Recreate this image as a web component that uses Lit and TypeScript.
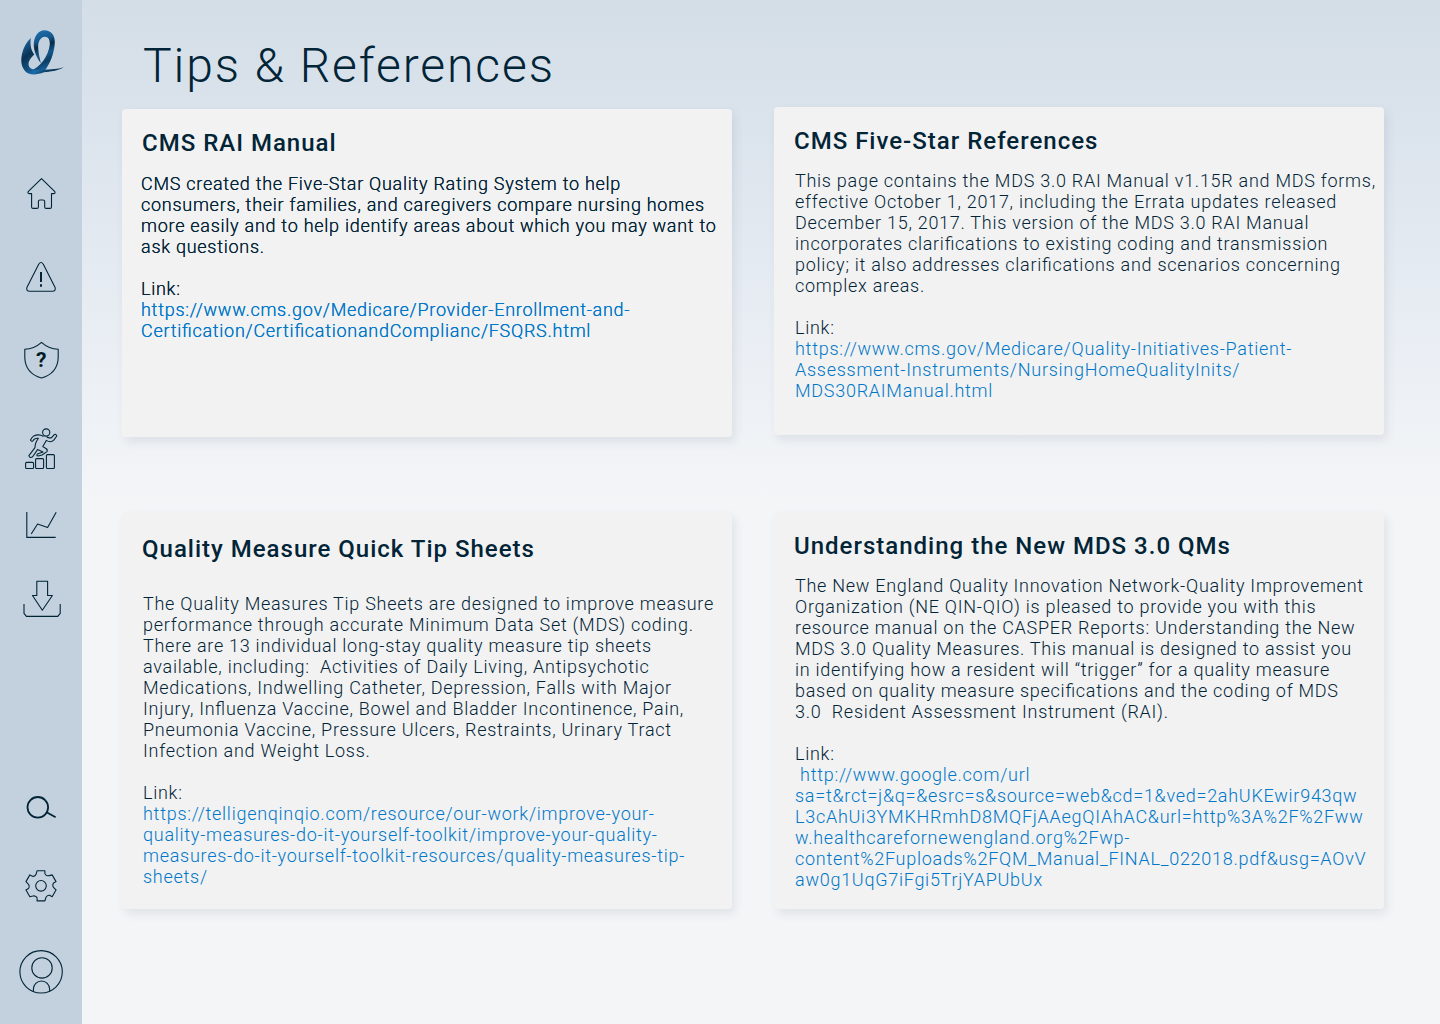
import { LitElement, html, svg, css } from "lit";
import { customElement, property } from "lit/decorators.js";

interface NavItem {
  name: string;
  top: number;
  height: number;
  art: unknown;
}

const cog = (() => {
  const cx = 41, cy = 885.8;
  const pts: string[] = [];
  for (let i = 0; i < 6; i++) {
    const a = (i * 60 * Math.PI) / 180;
    const p = (x: number, y: number) =>
      `${(cx + x * Math.cos(a) - y * Math.sin(a)).toFixed(2)} ${(cy + x * Math.sin(a) + y * Math.cos(a)).toFixed(2)}`;
    pts.push(
      `${i === 0 ? "M" : "L"}${p(-3.9, -15.1)}L${p(3.9, -15.1)}L${p(3.9, -12.2)}Q${p(4.4, -10.9)} ${p(5.6, -10.4)}Q${p(6.8, -9.8)} ${p(8.2, -10.2)}`
    );
  }
  return pts.join("") + "Z";
})();

const topItems: NavItem[] = [
  {
    name: "home", top: 150, height: 85,
    art: svg`<path d="M41.5 178.6 54.6 191.3Q56 193.6 53.4 193.6H51.5V206.9Q51.5 208.4 50 208.4H46.2Q44.7 208.4 44.7 206.9V201.6Q44.7 200 43 200H40Q38.4 200 38.4 201.6V206.9Q38.4 208.4 36.9 208.4H33.1Q31.6 208.4 31.6 206.9V193.6H29.6Q27 193.6 28.4 191.3Z"/>`,
  },
  {
    name: "alerts", top: 235, height: 85,
    art: svg`<path d="M38.7 264.2Q41 260.9 43.3 264.2L55 287.2Q56.2 291.3 52.4 291.3H29.6Q25.8 291.3 27 287.2Z"/><path stroke-width="2" d="M41 272V282M41 284.2V286.8"/>`,
  },
  {
    name: "help", top: 320, height: 85,
    art: svg`<path d="M41.5 342.4Q34 349.2 24.8 349.2V358Q25.6 373.5 41.5 378Q57.4 373.5 58.2 358V349.2Q49 349.2 41.5 342.4Z"/><text class="q" x="41.3" y="367.4">?</text>`,
  },
  {
    name: "goals", top: 405, height: 85,
    art: svg`<circle cx="46.2" cy="432.5" r="3.6"/><path d="M43.600 436.400C40.500 434.600 37 434.500 33.800 435.900Q31.600 437.600 30.500 440Q31.600 442.300 33.100 440.600Q34.400 437.900 38.400 438.300C35.800 442 34.800 445 35 447.600L28.900 455.600Q29.800 458.600 32.600 456.800L37.600 449.600L43 452L37.400 454Q36 455.600 38.200 456L42 455L47 451.600Q48 449.600 45.600 448.300L42.800 446.600L46.300 440.400Q50.500 443 53.600 440.400L56.800 436Q55.600 433.200 54 434.800L51.600 437.600Q48.600 438.400 46.800 437"/><rect x="25.600" y="462.400" width="8" height="6.100" rx="1"/><rect x="35.600" y="458.600" width="8" height="9.900" rx="1"/><rect x="46.400" y="454.600" width="8" height="13.900" rx="1"/>`,
  },
  {
    name: "trends", top: 490, height: 70,
    art: svg`<path d="M26.8 512V537.4H55.7"/><path d="M31.2 534 37.6 524 47.6 527.4 56.2 512.2"/>`,
  },
  {
    name: "download", top: 560, height: 80,
    art: svg`<path d="M36.8 581.3H47.6V595.5H52.4L42.3 610.2 32.5 595.5H36.8Z"/><path d="M24 604V613.4L26.4 616.4H57.8L60.2 613.4V604"/>`,
  },
];

const bottomItems: NavItem[] = [
  {
    name: "search", top: 770, height: 75,
    art: svg`<circle cx="37.8" cy="807.3" r="10.3" stroke-width="1.8"/><path stroke-width="1.8" d="M46.6 812.2 55.6 817.2"/>`,
  },
  {
    name: "settings", top: 845, height: 85,
    art: svg`<path d=${cog}/><circle cx="41" cy="885.8" r="5.3"/>`,
  },
  {
    name: "profile", top: 930, height: 94,
    art: svg`<circle cx="41.100" cy="971.800" r="21.200"/><circle cx="42" cy="967.900" r="10.200"/><path d="M33.400 991.600V989.100A8.100 8.100 0 0 1 49.600 989.100V991.400"/>`,
  },
];

@customElement("side-nav")
class SideNav extends LitElement {
  static styles = css`
    :host { display: flex; flex-direction: column; justify-content: space-between; width: 82px; background: #c3d1de; }
    .logo { display: block; margin-bottom: 40px; }
    .item { display: block; }
    .item, .logo { width: 82px; }
    .icon { fill: none; stroke: #022437; stroke-width: 1.1; stroke-linejoin: round; }
    .q { font: 700 21px Roboto, sans-serif; fill: #011a28; stroke: none; text-anchor: middle; }
  `;
  private item = (i: NavItem) => html`<a class="item" aria-label=${i.name}>
    <svg class="item icon" height=${i.height} viewBox="0 ${i.top} 82 ${i.height}">${i.art}</svg>
  </a>`;
  render() {
    return html`
      <nav>
        <svg class="logo" height="110" viewBox="0 0 82 110">
          <defs>
            <linearGradient id="body" gradientUnits="userSpaceOnUse" x1="22" y1="46" x2="44" y2="74">
              <stop offset="0" stop-color="#1a5c92"/><stop offset=".3" stop-color="#0a3252"/><stop offset=".6" stop-color="#12507f"/><stop offset=".8" stop-color="#1b6cab"/><stop offset="1" stop-color="#0b3a5e"/>
            </linearGradient>
            <linearGradient id="loop" gradientUnits="userSpaceOnUse" x1="37" y1="34" x2="50" y2="70">
              <stop offset="0" stop-color="#1b69a6"/><stop offset=".2" stop-color="#15578b"/><stop offset=".34" stop-color="#082b46"/><stop offset=".55" stop-color="#15578b"/><stop offset=".75" stop-color="#0c3e66"/><stop offset="1" stop-color="#1b6cab"/>
            </linearGradient>
          </defs>
          <path fill="url(#loop)" d="M40.800 63.300C36 57 33.300 49 33.800 43C34.600 35 39 30.200 44.300 30.200C51 30.200 55.200 35 54.800 43C54.300 53 50 64 44.500 71L37 73.500L31 70.500C40 67.500 48.500 56 49.800 44.500C50 39.500 48.300 36.700 45 36.700C40 37 37.800 42 38.200 48C38.500 54 39.800 58 40.800 63.300Z"/>
          <path fill="url(#body)" d="M30.800 38C29.900 45 31 50 34.300 54.500C30 58.500 28 62 28.700 65.500C30 69.800 36 70.600 43 69.800C51 69 57.500 69.200 63.800 67.200C58 71.300 50 71.200 44 72.300C38 74.400 33 75.200 28.500 73.500C22 70.500 20 62 22 54C23.500 47.500 26.500 42 30.800 38Z"/>
        </svg>
        ${topItems.map(this.item)}
      </nav>
      <nav>${bottomItems.map(this.item)}</nav>
    `;
  }
}

@customElement("tip-card")
class TipCard extends LitElement {
  @property() heading = "";
  @property({ attribute: false }) lines: string[] = [];
  @property({ attribute: false }) link: string[] = [];
  static styles = css`
    :host { display: block; box-sizing: border-box; background: #f2f2f2; border-radius: 4px; box-shadow: 3px 5px 10px rgba(60, 80, 95, .1); color: #022437; }
    .heading { margin: 0; font: 500 24px/28px Roboto, sans-serif; letter-spacing: 1px; padding-left: 20px; white-space: pre; }
    .body { margin: var(--body-gap, 18px) 0 0; padding-left: var(--body-left, 21px); font: 300 18px/21px Roboto, sans-serif; letter-spacing: .73px; font-feature-settings: "liga" 1; white-space: pre; }
    .body, .link { text-shadow: var(--body-shadow, none); }
    .link { color: #0077c8; }
  `;
  render() {
    return html`<h2 class="heading">${this.heading}</h2><p class="body">${this.lines.join("\n")}

Link:
<a class="link">${this.link.join("\n")}</a></p>`;
  }
}

@customElement("app-root")
class AppRoot extends LitElement {
  static styles = css`
    :host { display: flex; width: 1440px; height: 1024px; overflow: hidden; background: linear-gradient(180deg, #d4dee7 0, #dae3ec 110px, #e3e9f1 240px, #ecf0f5 380px, #f3f5f7 500px, #f4f5f7 100%); }
    side-nav { flex: none; }
    .main { flex: 1; padding-left: 40px; }
    .title { margin: 0; height: 107px; box-sizing: border-box; padding: 38px 0 0 21px; font: 300 48px/56px Roboto, sans-serif; letter-spacing: 1.9px; color: #022437; white-space: pre; }
    .columns { display: grid; grid-template-columns: 610px 610px; column-gap: 42px; }
    .col { display: flex; flex-direction: column; }
    .rai { margin-top: 2px; height: 328px; padding-top: 20px; --body-gap: 16px; --body-left: 19px; --body-shadow: 0 0 0 currentColor; }
    .tips { margin-top: 75px; height: 397px; padding-top: 23px; --body-gap: 30px; }
    .star { height: 328px; padding-top: 20px; --body-gap: 15px; }
    .qms { margin-top: 77px; height: 397px; padding-top: 20px; --body-gap: 15px; }
  `;
  render() {
    return html`
      <side-nav></side-nav>
      <main class="main">
        <h1 class="title">Tips &amp; References</h1>
        <div class="columns">
          <div class="col">
            <tip-card class="rai" heading="CMS RAI Manual"
              .lines=${[
                "CMS created the Five-Star Quality Rating System to help",
                "consumers, their families, and caregivers compare nursing homes",
                "more easily and to help identify areas about which you may want to",
                "ask questions.",
              ]}
              .link=${[
                "https://www.cms.gov/Medicare/Provider-Enrollment-and-",
                "Certification/CertificationandComplianc/FSQRS.html",
              ]}></tip-card>
            <tip-card class="tips" heading="Quality Measure Quick Tip Sheets"
              .lines=${[
                "The Quality Measures Tip Sheets are designed to improve measure",
                "performance through accurate Minimum Data Set (MDS) coding.",
                "There are 13 individual long-stay quality measure tip sheets",
                "available, including:  Activities of Daily Living, Antipsychotic",
                "Medications, Indwelling Catheter, Depression, Falls with Major",
                "Injury, Influenza Vaccine, Bowel and Bladder Incontinence, Pain,",
                "Pneumonia Vaccine, Pressure Ulcers, Restraints, Urinary Tract",
                "Infection and Weight Loss.",
              ]}
              .link=${[
                "https://telligenqinqio.com/resource/our-work/improve-your-",
                "quality-measures-do-it-yourself-toolkit/improve-your-quality-",
                "measures-do-it-yourself-toolkit-resources/quality-measures-tip-",
                "sheets/",
              ]}></tip-card>
          </div>
          <div class="col">
            <tip-card class="star" heading="CMS Five-Star References"
              .lines=${[
                "This page contains the MDS 3.0 RAI Manual v1.15R and MDS forms,",
                "effective October 1, 2017, including the Errata updates released",
                "December 15, 2017. This version of the MDS 3.0 RAI Manual",
                "incorporates clarifications to existing coding and transmission",
                "policy; it also addresses clarifications and scenarios concerning",
                "complex areas.",
              ]}
              .link=${[
                "https://www.cms.gov/Medicare/Quality-Initiatives-Patient-",
                "Assessment-Instruments/NursingHomeQualityInits/",
                "MDS30RAIManual.html",
              ]}></tip-card>
            <tip-card class="qms" heading="Understanding the New MDS 3.0 QMs"
              .lines=${[
                "The New England Quality Innovation Network-Quality Improvement",
                "Organization (NE QIN-QIO) is pleased to provide you with this",
                "resource manual on the CASPER Reports: Understanding the New",
                "MDS 3.0 Quality Measures. This manual is designed to assist you",
                "in identifying how a resident will “trigger” for a quality measure",
                "based on quality measure specifications and the coding of MDS",
                "3.0  Resident Assessment Instrument (RAI).",
              ]}
              .link=${[
                " http://www.google.com/url",
                "sa=t&rct=j&q=&esrc=s&source=web&cd=1&ved=2ahUKEwir943qw",
                "L3cAhUi3YMKHRmhD8MQFjAAegQIAhAC&url=http%3A%2F%2Fww",
                "w.healthcarefornewengland.org%2Fwp-",
                "content%2Fuploads%2FQM_Manual_FINAL_022018.pdf&usg=AOvV",
                "aw0g1UqG7iFgi5TrjYAPUbUx",
              ]}></tip-card>
          </div>
        </div>
      </main>
    `;
  }
}
